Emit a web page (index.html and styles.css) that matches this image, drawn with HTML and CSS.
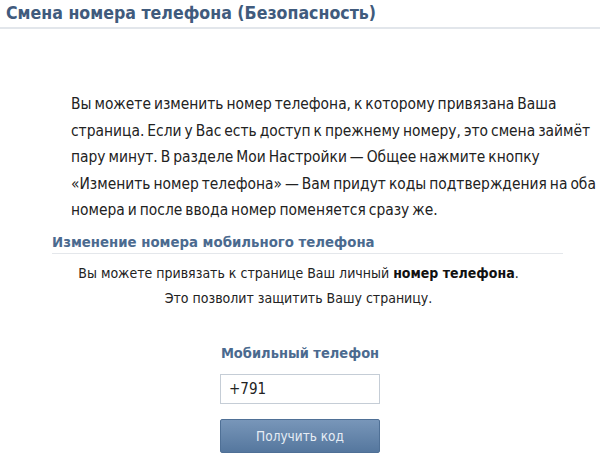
FILE: index.html
```html
<!DOCTYPE html>
<html lang="ru">
<head>
<meta charset="utf-8">
<link rel="stylesheet" href="styles.css">
</head>
<body>
<header class="page-head">
  <h1 class="page-title">Смена номера телефона (Безопасность)</h1>
</header>
<p class="intro">Вы можете изменить номер телефона, к которому привязана Ваша<br>страница. Если у Вас есть доступ к прежнему номеру, это смена займёт<br>пару минут. В разделе Мои Настройки — Общее нажмите кнопку<br>«Изменить номер телефона» — Вам придут коды подтверждения на оба<br>номера и после ввода номер поменяется сразу же.</p>
<section class="vk">
  <h2 class="vk-title">Изменение номера мобильного телефона</h2>
  <div class="vk-note">
    <div class="vk-line">Вы можете привязать к странице Ваш личный <b>номер телефона</b>.</div>
    <div class="vk-line">Это позволит защитить Вашу страницу.</div>
  </div>
  <div class="vk-form">
    <div class="vk-label">Мобильный телефон</div>
    <div class="vk-input">+791</div>
    <div class="vk-button">Получить код</div>
  </div>
</section>
</body>
</html>
```
FILE: styles.css
```css
html, body {
  margin: 0;
  padding: 0;
  background: #ffffff;
}
body {
  width: 600px;
  height: 462px;
  overflow: hidden;
  font-family: "DejaVu Sans Condensed", "DejaVu Sans", Verdana, sans-serif;
  color: #222222;
}
.page-head {
  border-bottom: 2px solid #e2e6eb;
  height: 27px;
  padding-left: 6px;
}
.page-title {
  margin: 0;
  font-size: 17.6px;
  line-height: 26px;
  font-weight: bold;
  color: #405b7d;
  white-space: nowrap;
}
.intro {
  margin: 62px 0 0 71px;
  font-size: 15.4px;
  word-spacing: -1.4px;
  line-height: 26.5px;
  color: #222222;
  white-space: nowrap;
}
.vk {
  margin: 7px 37px 0 52px;
}
.vk-title {
  margin: 0;
  font-size: 14.8px;
  line-height: 22px;
  font-weight: bold;
  color: #4b6a8f;
  border-bottom: 1px solid #e4e7eb;
}
.vk-note {
  margin-top: 7px;
  padding-right: 18px;
  display: flex;
  flex-direction: column;
}
.vk-line {
  text-align: center;
  font-size: 14px;
  line-height: 25px;
  height: 25px;
  white-space: nowrap;
  color: #222222;
}
.vk-line b {
  color: #111111;
}
.vk-form {
  width: 160px;
  margin: 32px 0 0 168px;
  display: flex;
  flex-direction: column;
}
.vk-label {
  text-align: center;
  white-space: nowrap;
  font-size: 14.5px;
  line-height: 20px;
  font-weight: bold;
  color: #4b6a8f;
}
.vk-input {
  margin-top: 11px;
  height: 28px;
  border: 1px solid #c5cdd6;
  padding-left: 8px;
  font-size: 15px;
  line-height: 28px;
  color: #222222;
}
.vk-button {
  margin-top: 15px;
  height: 32px;
  border: 1px solid #4f7096;
  border-radius: 2px;
  background: linear-gradient(#7896b9, #55779e);
  color: #e6edf5;
  text-align: center;
  font-size: 13.5px;
  line-height: 32px;
}
```
